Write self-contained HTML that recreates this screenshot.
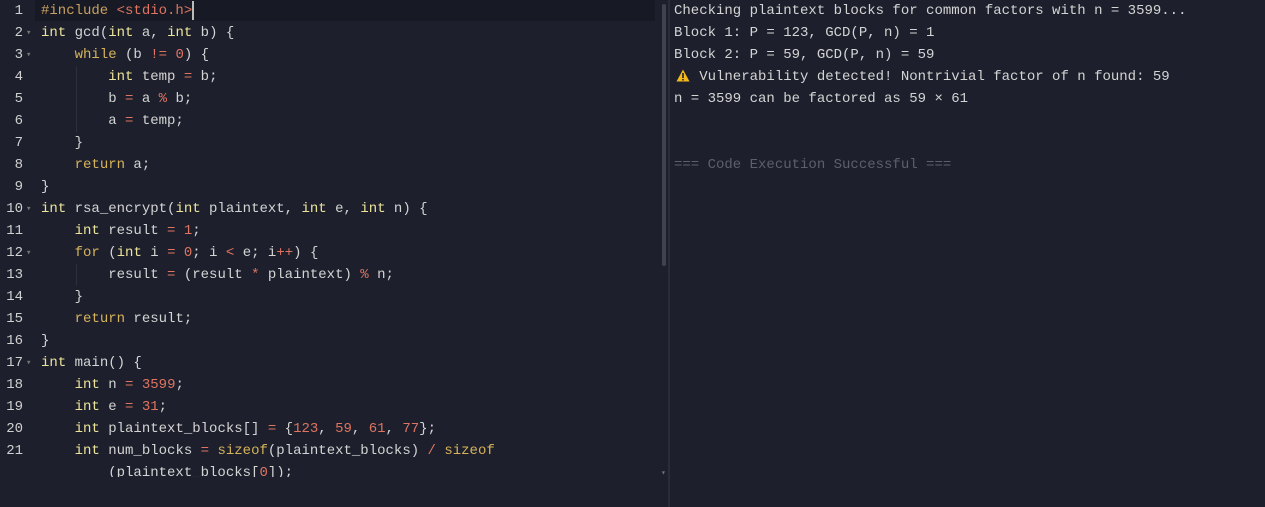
<!DOCTYPE html><html><head><style>
body{margin:0;width:1265px;height:507px;background:#1d202c;overflow:hidden;font-family:"Liberation Mono",monospace;font-size:14px;color:#d4d4d4}
.ed{position:absolute;left:0;top:0;width:660px;height:477px;overflow:hidden}
.l{position:absolute;left:0;height:22px;line-height:22px;white-space:pre;width:660px}
.n{position:absolute;left:0;width:23px;text-align:right;color:#d0d0d0}
.f{position:absolute;left:26px;color:#777;font-size:9px}
.c{position:absolute;left:41px}
.k{color:#ece39a}.w{color:#d6b35a}.m{color:#df7460}.o{color:#e28c66}.p{color:#c9a060}
.out{position:absolute;left:674px;top:0;white-space:pre;line-height:22px}
.g{position:absolute;width:1px;background:#2c303c}
</style></head><body>
<div style="position:absolute;left:35px;top:0;width:620px;height:21px;background:#171a24"></div>
<div style="position:absolute;left:192px;top:1px;width:2px;height:19px;background:#bbb"></div>
<div style="position:absolute;left:662px;top:4px;width:4px;height:262px;background:#40434f;border-radius:2px"></div>
<div style="position:absolute;left:668px;top:0;width:2px;height:507px;background:#2a2d38"></div>
<div class="g" style="left:76px;top:66px;height:66px"></div>
<div class="g" style="left:76px;top:264px;height:22px"></div>
<div class="ed">
<div class="l" style="top:0"><span class="n">1</span><span class="c"><span class="p">#include </span><span class="m">&lt;stdio.h&gt;</span></span></div>
<div class="l" style="top:22px"><span class="n">2</span><span class="f">▾</span><span class="c"><span class="k">int</span> gcd(<span class="k">int</span> a, <span class="k">int</span> b) {</span></div>
<div class="l" style="top:44px"><span class="n">3</span><span class="f">▾</span><span class="c">    <span class="w">while</span> (b <span class="m">!=</span> <span class="m">0</span>) {</span></div>
<div class="l" style="top:66px"><span class="n">4</span><span class="c">        <span class="k">int</span> temp <span class="m">=</span> b;</span></div>
<div class="l" style="top:88px"><span class="n">5</span><span class="c">        b <span class="m">=</span> a <span class="m">%</span> b;</span></div>
<div class="l" style="top:110px"><span class="n">6</span><span class="c">        a <span class="m">=</span> temp;</span></div>
<div class="l" style="top:132px"><span class="n">7</span><span class="c">    }</span></div>
<div class="l" style="top:154px"><span class="n">8</span><span class="c">    <span class="w">return</span> a;</span></div>
<div class="l" style="top:176px"><span class="n">9</span><span class="c">}</span></div>
<div class="l" style="top:198px"><span class="n">10</span><span class="f">▾</span><span class="c"><span class="k">int</span> rsa_encrypt(<span class="k">int</span> plaintext, <span class="k">int</span> e, <span class="k">int</span> n) {</span></div>
<div class="l" style="top:220px"><span class="n">11</span><span class="c">    <span class="k">int</span> result <span class="m">=</span> <span class="m">1</span>;</span></div>
<div class="l" style="top:242px"><span class="n">12</span><span class="f">▾</span><span class="c">    <span class="w">for</span> (<span class="k">int</span> i <span class="m">=</span> <span class="m">0</span>; i <span class="m">&lt;</span> e; i<span class="m">++</span>) {</span></div>
<div class="l" style="top:264px"><span class="n">13</span><span class="c">        result <span class="m">=</span> (result <span class="m">*</span> plaintext) <span class="m">%</span> n;</span></div>
<div class="l" style="top:286px"><span class="n">14</span><span class="c">    }</span></div>
<div class="l" style="top:308px"><span class="n">15</span><span class="c">    <span class="w">return</span> result;</span></div>
<div class="l" style="top:330px"><span class="n">16</span><span class="c">}</span></div>
<div class="l" style="top:352px"><span class="n">17</span><span class="f">▾</span><span class="c"><span class="k">int</span> main() {</span></div>
<div class="l" style="top:374px"><span class="n">18</span><span class="c">    <span class="k">int</span> n <span class="m">=</span> <span class="m">3599</span>;</span></div>
<div class="l" style="top:396px"><span class="n">19</span><span class="c">    <span class="k">int</span> e <span class="m">=</span> <span class="m">31</span>;</span></div>
<div class="l" style="top:418px"><span class="n">20</span><span class="c">    <span class="k">int</span> plaintext_blocks[] <span class="m">=</span> {<span class="m">123</span>, <span class="m">59</span>, <span class="m">61</span>, <span class="m">77</span>};</span></div>
<div class="l" style="top:440px"><span class="n">21</span><span class="c">    <span class="k">int</span> num_blocks <span class="m">=</span> <span class="w">sizeof</span>(plaintext_blocks) <span class="m">/</span> <span class="w">sizeof</span></span></div>
<div class="l" style="top:462px"><span class="c">        (plaintext_blocks[<span class="m">0</span>]);</span></div>
</div>
<div style="position:absolute;left:661px;top:468px;color:#777;font-size:8px">▾</div>
<svg style="position:absolute;left:676px;top:69px" width="14" height="13" viewBox="0 0 14 13"><path d="M7 0.5L13.5 12.5H0.5Z" fill="#f2b81c"/><rect x="6.2" y="4" width="1.6" height="5" fill="#1d202c"/><rect x="6.2" y="10" width="1.6" height="1.5" fill="#1d202c"/></svg>
<div class="out">Checking plaintext blocks for common factors with n = 3599...
Block 1: P = 123, GCD(P, n) = 1
Block 2: P = 59, GCD(P, n) = 59
   Vulnerability detected! Nontrivial factor of n found: 59
n = 3599 can be factored as 59 × 61


<span style="color:#5c606c">=== Code Execution Successful ===</span></div>
</body></html>
